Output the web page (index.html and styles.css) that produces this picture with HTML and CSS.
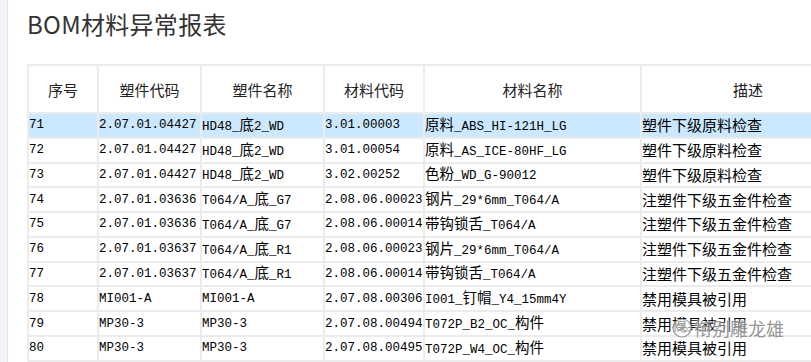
FILE: index.html
```html
<!DOCTYPE html>
<html lang="zh-CN">
<head>
<meta charset="utf-8">
<title>BOM材料异常报表</title>
<link rel="stylesheet" href="styles.css">
</head>
<body>
<div class="page">
  <aside class="strip"></aside>
  <main class="content">
    <h1 class="title">BOM材料异常报表</h1>
    <table class="grid">
      <colgroup>
        <col class="c1"><col class="c2"><col class="c3"><col class="c4"><col class="c5"><col class="c6">
      </colgroup>
      <thead>
        <tr><th>序号</th><th>塑件代码</th><th>塑件名称</th><th>材料代码</th><th>材料名称</th><th>描述</th></tr>
      </thead>
      <tbody>
        <tr class="sel"><td>71</td><td>2.07.01.04427</td><td>HD48_<span class="z">底</span>2_WD</td><td>3.01.00003</td><td><span class="z">原料</span>_ABS_HI-121H_LG</td><td class="zz">塑件下级原料检查</td></tr>
        <tr><td>72</td><td>2.07.01.04427</td><td>HD48_<span class="z">底</span>2_WD</td><td>3.01.00054</td><td><span class="z">原料</span>_AS_ICE-80HF_LG</td><td class="zz">塑件下级原料检查</td></tr>
        <tr><td>73</td><td>2.07.01.04427</td><td>HD48_<span class="z">底</span>2_WD</td><td>3.02.00252</td><td><span class="z">色粉</span>_WD_G-90012</td><td class="zz">塑件下级原料检查</td></tr>
        <tr><td>74</td><td>2.07.01.03636</td><td>T064/A_<span class="z">底</span>_G7</td><td>2.08.06.00023</td><td><span class="z">钢片</span>_29*6mm_T064/A</td><td class="zz">注塑件下级五金件检查</td></tr>
        <tr><td>75</td><td>2.07.01.03636</td><td>T064/A_<span class="z">底</span>_G7</td><td>2.08.06.00014</td><td><span class="z">带钩锁舌</span>_T064/A</td><td class="zz">注塑件下级五金件检查</td></tr>
        <tr><td>76</td><td>2.07.01.03637</td><td>T064/A_<span class="z">底</span>_R1</td><td>2.08.06.00023</td><td><span class="z">钢片</span>_29*6mm_T064/A</td><td class="zz">注塑件下级五金件检查</td></tr>
        <tr><td>77</td><td>2.07.01.03637</td><td>T064/A_<span class="z">底</span>_R1</td><td>2.08.06.00014</td><td><span class="z">带钩锁舌</span>_T064/A</td><td class="zz">注塑件下级五金件检查</td></tr>
        <tr><td>78</td><td>MI001-A</td><td>MI001-A</td><td>2.07.08.00306</td><td>I001_<span class="z">钉帽</span>_Y4_15mm4Y</td><td class="zz">禁用模具被引用</td></tr>
        <tr><td>79</td><td>MP30-3</td><td>MP30-3</td><td>2.07.08.00494</td><td>T072P_B2_OC_<span class="z">构件</span></td><td class="zz">禁用模具被引用</td></tr>
        <tr><td>80</td><td>MP30-3</td><td>MP30-3</td><td>2.07.08.00495</td><td>T072P_W4_OC_<span class="z">构件</span></td><td class="zz">禁用模具被引用</td></tr>
      </tbody>
    </table>
  </main>
</div>
<div class="watermark">
  <svg class="wm-icon" width="20" height="20" viewBox="0 0 20 20" aria-hidden="true">
    <circle cx="10" cy="10" r="9" fill="rgba(255,255,255,0.6)" stroke="#9a9a9a" stroke-width="1.2"/>
    <ellipse cx="8.5" cy="9" rx="4" ry="3.2" fill="none" stroke="#9a9a9a" stroke-width="1"/>
    <ellipse cx="12" cy="11.5" rx="3.3" ry="2.6" fill="none" stroke="#9a9a9a" stroke-width="1"/>
  </svg>
  <span class="wm-text">衔别雕龙雄</span>
</div>
</body>
</html>
```

FILE: styles.css
```css
html, body {
  margin: 0;
  padding: 0;
  background: #fff;
  overflow: hidden;
}

.page {
  display: flex;
  width: 811px;
  height: 362px;
  overflow: hidden;
}

.strip {
  flex: 0 0 7px;
  background: #f4f4f8;
  border-right: 1px solid #e6e6ec;
}

.content {
  flex: 1 1 auto;
  padding-left: 19px;
  overflow: hidden;
}

.title {
  margin: 0;
  padding-top: 12px;
  font-family: "Noto Sans CJK SC", "Noto Sans", sans-serif;
  font-weight: 400;
  font-size: 24px;
  line-height: 24px;
  color: #333;
  letter-spacing: 0.3px;
}

.grid {
  margin-top: 28px;
  border-collapse: separate;
  border-spacing: 2px;
  background: #ececec;
  table-layout: fixed;
  width: 829px;
}

.c1 { width: 68px; }
.c2 { width: 101px; }
.c3 { width: 121px; }
.c4 { width: 98px; }
.c5 { width: 215px; }
.c6 { width: 212px; }

.grid th {
  background: #fff;
  height: 46px;
  padding: 0;
  font-family: "Noto Sans CJK SC", sans-serif;
  font-weight: 400;
  font-size: 15px;
  color: #222;
  text-align: center;
  vertical-align: middle;
}

.grid td {
  background: #fff;
  height: 22.78px;
  padding: 0;
  font-family: "Liberation Mono", "Noto Sans CJK SC", monospace;
  font-size: 12.5px;
  line-height: 16px;
  color: #000;
  white-space: nowrap;
  overflow: hidden;
  vertical-align: middle;
}

.grid tr.sel td {
  background: #cce8ff;
}

.z {
  font-family: "Noto Sans CJK SC", sans-serif;
  font-size: 14.5px;
}

.grid td.zz {
  font-family: "Noto Sans CJK SC", sans-serif;
  font-size: 15px;
}

.watermark {
  position: absolute;
  left: 672px;
  top: 318px;
  display: flex;
  align-items: center;
  gap: 2px;
}

.wm-text {
  font-family: "Noto Sans CJK SC", sans-serif;
  font-size: 18px;
  line-height: 20px;
  color: #8c8c8c;
  text-shadow: 0 0 2px #fff, 0 0 2px #fff;
  opacity: 0.9;
}
```
